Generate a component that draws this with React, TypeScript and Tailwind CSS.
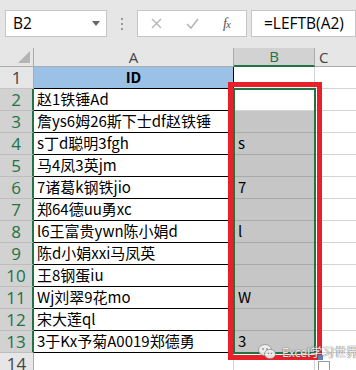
import React from "react";

const rows: { a: string; b: string }[] = [
  { a: "ID", b: "" },
  { a: "赵1铁锤Ad", b: "" },
  { a: "詹ys6姆26斯下士df赵铁锤", b: "" },
  { a: "s丁d聪明3fgh", b: "s" },
  { a: "马4凤3英jm", b: "" },
  { a: "7诸葛k钢铁jio", b: "7" },
  { a: "郑64德uu勇xc", b: "" },
  { a: "l6王富贵ywn陈小娟d", b: "l" },
  { a: "陈d小娟xxi马凤英", b: "" },
  { a: "王8钢蛋iu", b: "" },
  { a: "Wj刘翠9花mo", b: "W" },
  { a: "宋大莲ql", b: "" },
  { a: "3于Kx予菊A0019郑德勇", b: "3" },
];

function Row({ n, a, b }: { n: number; a: string; b: string }) {
  const selected = n >= 2 && n <= 13;
  const isHeader = n === 1;
  const hasA = n <= 13;
  return (
    <div className="flex h-[22px]">
      <div
        className={
          selected
            ? "w-[34px] shrink-0 flex items-center justify-center bg-[#d2d2d2] text-[#217346] border-b border-[#bdbdbd] border-r-2 border-r-[#217346] text-[17px] font-['Open_Sans',sans-serif]"
            : "w-[34px] shrink-0 flex items-center justify-center bg-[#e6e6e6] text-[#444] border-b border-[#c6c6c6] border-r border-r-[#ababab] text-[17px] font-['Open_Sans',sans-serif]"
        }
      >
        {n}
      </div>
      {isHeader ? (
        <div className="w-[200px] shrink-0 bg-[#9bc2e6] border-b border-r border-black flex items-center justify-center font-bold text-[15px] text-black">
          {a}
        </div>
      ) : hasA ? (
        <div className="w-[200px] shrink-0 border-b border-r border-black flex items-center pl-[3px] text-[15px] text-black whitespace-nowrap overflow-visible">
          {a}
        </div>
      ) : (
        <div className="w-[200px] shrink-0 border-b border-r border-[#d4d4d4]" />
      )}
      <div
        className={
          n >= 3 && n <= 13
            ? "w-[81px] shrink-0 bg-[#c6c6c6] border-b border-r border-[#a9a9a9] flex items-center pl-[4px] text-[15px] text-black"
            : "w-[81px] shrink-0 bg-white border-b border-r border-[#d4d4d4] flex items-center pl-[4px] text-[15px] text-black"
        }
      >
        {b}
      </div>
      <div className="flex-1 border-b border-[#d4d4d4]" />
    </div>
  );
}

export default function App() {
  return (
    <div className="relative w-[356px] h-[370px] overflow-hidden bg-white font-['Noto_Sans_CJK_SC','Noto_Sans',sans-serif]">
      {/* formula bar */}
      <div className="h-[48px] bg-[#e6e6e6] flex items-start pt-[10px]">
        <div className="ml-[5px] w-[102px] h-[27px] bg-white border border-[#c6c6c6] flex items-center pl-[7px] pr-[6px] text-[15.5px] text-black font-['Open_Sans',sans-serif]">
          <span className="flex-1">B2</span>
          <svg width="8" height="5" viewBox="0 0 8 5">
            <path d="M0 0 L8 0 L4 5 Z" fill="#666" />
          </svg>
        </div>
        <div className="w-[30px] h-[27px] flex flex-col items-center justify-center gap-[3px]">
          <div className="w-[2px] h-[2px] bg-[#9a9a9a]" />
          <div className="w-[2px] h-[2px] bg-[#9a9a9a]" />
          <div className="w-[2px] h-[2px] bg-[#9a9a9a]" />
        </div>
        <div className="w-[110px] h-[27px] bg-white border border-[#c6c6c6] flex items-center">
          <svg className="ml-[13px]" width="11" height="11" viewBox="0 0 11 11">
            <path d="M1 1 L10 10 M10 1 L1 10" stroke="#b5b5b5" strokeWidth="1.4" />
          </svg>
          <svg className="ml-[24px]" width="13" height="11" viewBox="0 0 13 11">
            <path d="M1 6 L5 10 L12 1" stroke="#b5b5b5" strokeWidth="1.6" fill="none" />
          </svg>
          <span className="ml-[24px] text-[14px] italic text-[#555] font-['Liberation_Serif',serif] tracking-[-1px]">
            f<span className="text-[11px]">x</span>
          </span>
        </div>
        <div className="ml-[4px] flex-1 h-[27px] bg-white border border-[#c6c6c6] flex items-center pl-[12px] text-[15.5px] text-black font-['Open_Sans',sans-serif]">
          =LEFTB(A2)
        </div>
      </div>
      {/* column headers */}
      <div className="flex h-[19px] bg-[#e6e6e6] text-[15px] text-[#444] font-['Open_Sans',sans-serif]">
        <div className="w-[34px] shrink-0 border-r border-b border-[#ababab] relative">
          <svg className="absolute right-[3px] bottom-[3px]" width="12" height="12" viewBox="0 0 12 12">
            <path d="M12 0 L12 12 L0 12 Z" fill="#b4b4b4" />
          </svg>
        </div>
        <div className="w-[200px] shrink-0 border-r border-b border-[#ababab] flex items-center justify-center leading-none">
          A
        </div>
        <div className="w-[81px] shrink-0 bg-[#d2d2d2] border-r border-[#ababab] border-b-2 border-b-[#217346] flex items-center justify-center text-[#217346] leading-none">
          B
        </div>
        <div className="flex-1 border-b border-[#ababab] flex items-center pl-[4px] leading-none">C</div>
      </div>
      {rows.map((r, i) => (
        <Row key={i} n={i + 1} a={r.a} b={r.b} />
      ))}
      <Row n={14} a="" b="" />

      {/* selection border */}
      <div className="absolute left-[233px] top-[88px] w-[83px] h-[266px] border-2 border-[#217346] pointer-events-none" />
      {/* red annotation */}
      <div className="absolute left-[228px] top-[82px] w-[94px] h-[278px] border-[5px] border-[#e8202a] pointer-events-none" />
      {/* fill handle */}
      <div className="absolute left-[318px] top-[355px] w-[5px] h-[5px] bg-[#5a7fbf]" />
      <div className="absolute left-[318px] top-[361px] w-[12px] h-[12px] border border-[#999] bg-white" />

      {/* watermark */}
      <div className="absolute left-[258px] top-[344px] flex items-center gap-[6px] opacity-90">
        <svg width="18" height="16" viewBox="0 0 18 16">
          <ellipse cx="7" cy="6" rx="6.5" ry="5.5" fill="#f2f2f2" stroke="#8a8a8a" strokeWidth="0.8" />
          <ellipse cx="12" cy="10" rx="5.5" ry="4.6" fill="#f2f2f2" stroke="#8a8a8a" strokeWidth="0.8" />
          <circle cx="5" cy="5" r="0.9" fill="#8a8a8a" />
          <circle cx="9" cy="5" r="0.9" fill="#8a8a8a" />
          <circle cx="10.5" cy="9.5" r="0.7" fill="#8a8a8a" />
          <circle cx="13.5" cy="9.5" r="0.7" fill="#8a8a8a" />
        </svg>
        <span className="text-[12px] leading-[14px] text-[#f4f4f4] [text-shadow:0_0_1px_#555,0_0_1px_#555] whitespace-nowrap">
          Excel学习世界
        </span>
      </div>
    </div>
  );
}
